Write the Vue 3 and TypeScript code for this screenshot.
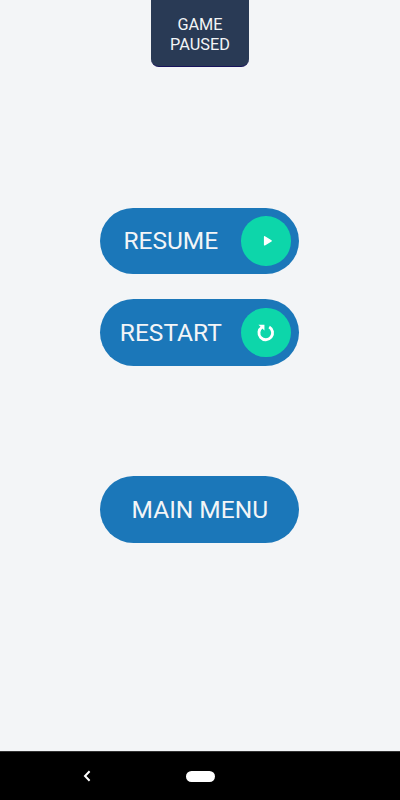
<script setup lang="ts">
interface MenuAction {
  label: string
  icon: 'play' | 'restart'
}

const actions: MenuAction[] = [
  { label: 'RESUME', icon: 'play' },
  { label: 'RESTART', icon: 'restart' },
]
</script>

<template>
  <div class="screen">
    <header class="banner">GAME<br />PAUSED</header>
    <main class="menu">
      <button v-for="action in actions" :key="action.icon" class="pill" type="button">
        <span class="label">{{ action.label }}</span>
        <span class="badge">
          <svg v-if="action.icon === 'play'" viewBox="0 0 50 50" aria-hidden="true">
            <path class="solid" d="M23.8 20.9 L30.4 25 L23.8 29.1 Z" />
          </svg>
          <svg v-else viewBox="0 0 50 50" aria-hidden="true">
            <path class="ring" d="M21.2 19.3 A6.9 6.9 0 1 0 28.4 19.1" />
            <path class="head" d="M17.6 16.8 H23.6 V22.8 Z" />
          </svg>
        </span>
      </button>
      <button class="pill main-menu" type="button">
        <span class="label">MAIN MENU</span>
      </button>
    </main>
    <footer class="navbar">
      <svg class="back" viewBox="0 0 8 12" aria-hidden="true">
        <path d="M6.6 1.2 L2 6 L6.6 10.8" />
      </svg>
      <span class="home"></span>
    </footer>
  </div>
</template>

<style>
body {
  margin: 0;
  background: #f3f5f7;
}
</style>

<style scoped>
.screen {
  display: flex;
  flex-direction: column;
  align-items: center;
  box-sizing: border-box;
  width: 100%;
  height: 800px;
  overflow: hidden;
  background: #f3f5f7;
  color: #f3f5f7;
  font-family: Roboto, sans-serif;
}
.banner {
  box-sizing: border-box;
  flex: none;
  width: 98px;
  height: 67.4px;
  padding-top: 14.6px;
  border-bottom: 1px solid #17135c;
  border-radius: 0 0 8px 8px;
  background: #293a55;
  font-size: 16.3px;
  line-height: 20px;
  text-align: center;
}
.menu {
  display: flex;
  flex: 1;
  flex-direction: column;
  gap: 25px;
  padding: 140.4px 0.4px 0 0;
}
.pill {
  display: flex;
  align-items: center;
  box-sizing: border-box;
  flex: none;
  width: 199px;
  height: 66.5px;
  padding: 0 8.4px 0 0;
  border: 0;
  border-radius: 34px;
  background: #1b77b9;
  color: inherit;
  font: inherit;
  font-size: 24.5px;
  line-height: 30px;
}
.label {
  flex: 1;
  text-align: center;
}
.badge {
  flex: none;
  width: 49.6px;
  height: 49.6px;
  border-radius: 50%;
  background: #0dd6aa;
}
.badge svg {
  display: block;
  width: 100%;
  height: 100%;
}
.solid {
  fill: #fff;
  stroke: #fff;
  stroke-width: 1.4;
  stroke-linejoin: round;
}
.ring {
  fill: none;
  stroke: #fff;
  stroke-width: 2.9;
}
.head {
  fill: #fff;
}
.main-menu {
  margin-top: 85.5px;
  padding: 0;
}
.navbar {
  display: flex;
  align-items: center;
  box-sizing: border-box;
  flex: none;
  width: 100%;
  height: 49px;
  padding-left: 83px;
  border-top: 1px solid #333;
  background: #000;
}
.back {
  width: 8px;
  height: 12px;
}
.back path {
  fill: none;
  stroke: #fff;
  stroke-width: 2;
}
.home {
  width: 29px;
  height: 11px;
  margin-left: 95px;
  border-radius: 5.5px;
  background: #fff;
}
</style>
